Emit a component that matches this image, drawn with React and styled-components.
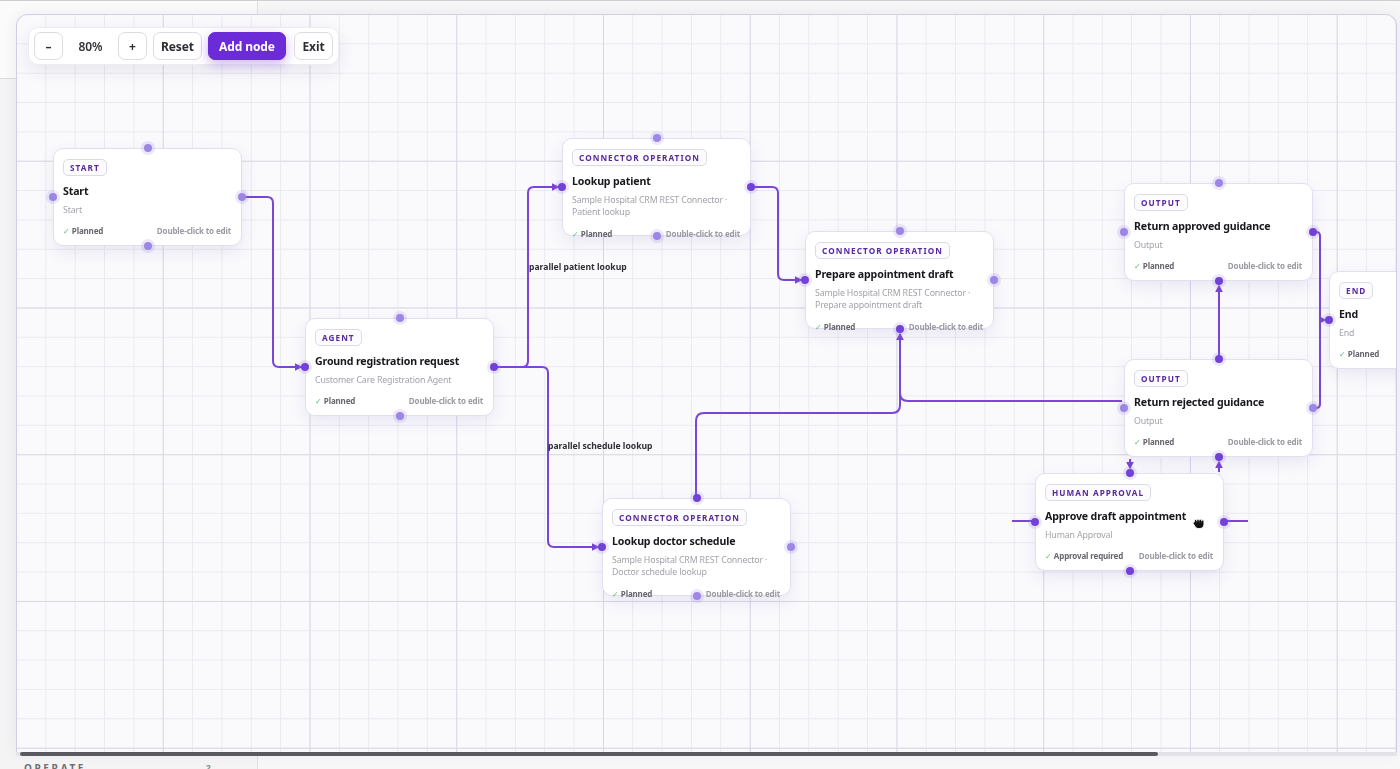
import React from 'react';
import styled, { createGlobalStyle } from 'styled-components';

// panel padding box starts here on the screen, all canvas data is in screen px
const OX = 17;
const OY = 15;
const EDGE = '#7a45d8';

const GlobalStyle = createGlobalStyle`
  html, body {
    margin: 0;
    height: 100%;
  }
  body {
    background: #f6f6f7;
    border-top: 1px solid #cfcfd3;
    box-sizing: border-box;
    overflow: hidden;
    font-family: "Noto Sans", "Open Sans", sans-serif;
  }
  #root {
    height: 100%;
  }
`;

const Shell = styled.div`
  display: grid;
  grid-template-columns: 258px 1fr;
  height: 100%;
`;

const Sidebar = styled.aside`
  display: flex;
  flex-direction: column;
  border-right: 1px solid #e1e1e4;
  background: #f4f4f5;
  overflow: hidden;
`;

const SidebarHeader = styled.div`
  height: 77px;
  flex-shrink: 0;
  background: #fbfbfb;
  border-bottom: 1px solid #dcdce0;
`;

const SidebarNav = styled.nav`
  flex: 1;
`;

const SectionHead = styled.div`
  display: flex;
  align-items: flex-start;
  justify-content: space-between;
  height: 20px;
  margin-bottom: -12px;
  padding: 0 46px 0 24px;
  font-size: 10px;
  font-weight: 700;
  letter-spacing: 2.6px;
  color: #6f6f76;
`;

const Count = styled.span`
  font-size: 9px;
  letter-spacing: 0;
  color: #8a8a90;
`;

const Main = styled.main`
  background: #f7f7f8;
`;

const Overlay = styled.div`
  position: fixed;
  left: 16px;
  top: 14px;
  right: 3px;
  bottom: 13px;
  display: flex;
  flex-direction: column;
`;

const Panel = styled.div`
  flex: 1;
  position: relative;
  overflow: hidden;
  border: 1px solid #d3cee6;
  border-bottom: none;
  border-radius: 12px 12px 0 0;
  background-color: #fafafd;
  background-image:
    linear-gradient(to right, #dad8e7 1px, transparent 1px),
    linear-gradient(to bottom, #dad8e7 1px, transparent 1px),
    linear-gradient(to right, #eaeaf1 1px, transparent 1px),
    linear-gradient(to bottom, #eaeaf1 1px, transparent 1px);
  background-size: 146.75px 146.75px, 146.75px 146.75px, 29.35px 29.35px, 29.35px 29.35px;
  background-position: -1px -1px;
  box-shadow: 0 0 14px rgba(60, 50, 100, 0.08);
`;

const ScrollTrack = styled.div`
  height: 4px;
  flex-shrink: 0;
  background: #e8e8ec;
`;

const ScrollThumb = styled.div`
  width: 1138px;
  height: 100%;
  margin-left: 4px;
  border-radius: 2px;
  background: #5c5c61;
`;

const Toolbar = styled.div`
  position: absolute;
  left: 11px;
  top: 12px;
  z-index: 5;
  display: flex;
  align-items: center;
  gap: 6px;
  padding: 4px 5px;
  background: #fff;
  border: 1px solid #ececf1;
  border-radius: 10px;
  box-shadow: 0 6px 18px rgba(40, 30, 80, 0.09);
`;

const Button = styled.button`
  height: 28px;
  width: ${p => p.$w}px;
  padding: 0;
  margin-left: ${p => p.$ml || 0}px;
  border: 1px solid ${p => (p.$primary ? '#6b2bd6' : '#dcdce2')};
  border-radius: 7px;
  background: ${p => (p.$primary ? '#6b2bd6' : '#fff')};
  color: ${p => (p.$primary ? '#fff' : '#2d2d33')};
  font-family: inherit;
  font-size: 12px;
  font-weight: 700;
  letter-spacing: -0.1px;
  cursor: pointer;
  box-shadow: ${p => (p.$primary ? '0 4px 12px rgba(107, 43, 214, 0.35)' : 'none')};
`;

const ZoomValue = styled.span`
  width: 43px;
  text-align: center;
  font-size: 12px;
  font-weight: 600;
  color: #333338;
`;

const EdgeLayer = styled.svg`
  position: absolute;
  left: 0;
  top: 0;
  width: 100%;
  height: 100%;
  overflow: visible;
  pointer-events: none;
`;

const EdgeLabel = styled.span.attrs(p => ({ style: { left: p.$x - OX, top: p.$y - OY } }))`
  position: absolute;
  transform: translateY(-50%);
  font-size: 8.6px;
  font-weight: 700;
  color: #2f2f36;
  white-space: nowrap;
`;

const Card = styled.div.attrs(p => ({ style: { left: p.$x - OX, top: p.$y - OY } }))`
  position: absolute;
  width: 189px;
  height: 98px;
  box-sizing: border-box;
  padding: 10px 10px 0 9px;
  background: #fff;
  border: 1px solid #e3dff0;
  border-radius: 10px;
  box-shadow: 0 6px 16px rgba(90, 70, 150, 0.1);
`;

const Badge = styled.div`
  display: flex;
  align-items: center;
  width: max-content;
  height: 17px;
  box-sizing: border-box;
  padding: 0 6px;
  border: 1px solid #dcdae6;
  border-radius: 5px;
  background: #fcfcff;
  font-size: 8.2px;
  font-weight: 700;
  letter-spacing: 1.05px;
  color: #58299c;
`;

const Title = styled.div`
  margin-top: 8px;
  font-size: 10.6px;
  font-weight: 700;
  letter-spacing: -0.15px;
  line-height: 15px;
  color: #17171c;
  white-space: nowrap;
`;

const Sub = styled.div`
  margin-top: 4.75px;
  font-size: 8.8px;
  letter-spacing: -0.15px;
  line-height: 12.5px;
  color: #a2a2aa;
  white-space: pre;
`;

const Footer = styled.div`
  display: flex;
  justify-content: space-between;
  margin-top: 8.75px;
  font-size: 8px;
  font-weight: 700;
  letter-spacing: -0.15px;
  line-height: 12px;
  color: #66666e;
  white-space: nowrap;
`;

const Check = styled.span`
  color: #5bbd74;
  margin-right: 2px;
  font-weight: 400;
`;

const Hint = styled.span`
  color: #9a9aa2;
`;

const Handle = styled.span`
  position: absolute;
  width: 8px;
  height: 8px;
  border-radius: 50%;
  background: ${p => (p.$strong ? '#7242d8' : '#9c86e6')};
  box-shadow: 0 0 0 3px rgba(150, 125, 230, 0.18);
  ${p => p.$side === 'top' && 'top: -5px; left: 50%; margin-left: -4px;'}
  ${p => p.$side === 'bottom' && 'bottom: -5px; left: 50%; margin-left: -4px;'}
  ${p => p.$side === 'left' && 'left: -5px; top: 50%; margin-top: -4px;'}
  ${p => p.$side === 'right' && 'right: -5px; top: 50%; margin-top: -4px;'}
`;

const Cursor = styled.svg.attrs(p => ({ style: { left: p.$x - OX, top: p.$y - OY } }))`
  position: absolute;
  width: 15px;
  height: 15px;
  overflow: visible;
`;

const nodes = [
  { id: 'start', x: 53, y: 148, kind: 'START', title: 'Start', sub: 'Start', status: 'Planned' },
  { id: 'agent', x: 305, y: 318, kind: 'AGENT', title: 'Ground registration request', sub: 'Customer Care Registration Agent', status: 'Planned', strong: ['left', 'right'] },
  { id: 'patient', x: 562, y: 138, kind: 'CONNECTOR OPERATION', title: 'Lookup patient', sub: 'Sample Hospital CRM REST Connector ·\nPatient lookup', status: 'Planned', strong: ['left', 'right'] },
  { id: 'prepare', x: 805, y: 231, kind: 'CONNECTOR OPERATION', title: 'Prepare appointment draft', sub: 'Sample Hospital CRM REST Connector ·\nPrepare appointment draft', status: 'Planned', strong: ['left', 'bottom'] },
  { id: 'doctor', x: 602, y: 498, kind: 'CONNECTOR OPERATION', title: 'Lookup doctor schedule', sub: 'Sample Hospital CRM REST Connector ·\nDoctor schedule lookup', status: 'Planned', strong: ['left', 'top'] },
  { id: 'approved', x: 1124, y: 183, kind: 'OUTPUT', title: 'Return approved guidance', sub: 'Output', status: 'Planned', strong: ['right', 'bottom'] },
  { id: 'rejected', x: 1124, y: 359, kind: 'OUTPUT', title: 'Return rejected guidance', sub: 'Output', status: 'Planned', strong: ['top', 'bottom'] },
  { id: 'approve', x: 1035, y: 473, kind: 'HUMAN APPROVAL', title: 'Approve draft appointment', sub: 'Human Approval', status: 'Approval required', strong: ['top', 'bottom', 'left', 'right'] },
  { id: 'end', x: 1329, y: 271, kind: 'END', title: 'End', sub: 'End', status: 'Planned', strong: ['left'] },
];

const edges = [
  { d: 'M242 197 H267 Q273 197 273 203 V361 Q273 367 279 367 H301', arrow: true },
  { d: 'M494 367 H522 Q528 367 528 361 V193 Q528 187 534 187 H558', arrow: true },
  { d: 'M494 367 H542 Q548 367 548 373 V541 Q548 547 554 547 H598', arrow: true },
  { d: 'M751 187 H772 Q778 187 778 193 V274 Q778 280 784 280 H801', arrow: true },
  { d: 'M696 497 V421 Q696 413 704 413 H892 Q900 413 900 405 V334', arrow: true },
  { d: 'M1122 401 H908 Q900 401 900 393' },
  { d: 'M1313 232 H1316 Q1320 232 1320 236 V316 Q1320 320 1324 320 H1325', arrow: true },
  { d: 'M1313 408 H1316 Q1320 408 1320 404 V322' },
  { d: 'M1219 359 V286', arrow: true },
  { d: 'M1130 459 V468', arrow: true },
  { d: 'M1219 472 V462', arrow: true },
  { d: 'M1012 521 H1035' },
  { d: 'M1224 521 H1248' },
];

const sides = ['top', 'left', 'right', 'bottom'];

const NodeCard = ({ node }) => (
  <Card $x={node.x} $y={node.y}>
    <Badge>{node.kind}</Badge>
    <Title>{node.title}</Title>
    <Sub>{node.sub}</Sub>
    <Footer>
      <span><Check>✓</Check>{node.status}</span>
      <Hint>Double-click to edit</Hint>
    </Footer>
    {sides.map(s => (
      <Handle key={s} $side={s} $strong={node.strong && node.strong.includes(s)} />
    ))}
  </Card>
);

const Edges = () => (
  <EdgeLayer>
    <defs>
      <marker id="arrow" viewBox="0 0 10 10" refX="8" refY="5" markerWidth="4" markerHeight="4" orient="auto">
        <path d="M0 0 L10 5 L0 10 z" fill={EDGE} />
      </marker>
    </defs>
    <g transform={`translate(${-OX} ${-OY})`}>
      {edges.map((e, i) => (
        <path
          key={i}
          d={e.d}
          fill="none"
          stroke={EDGE}
          strokeWidth="2"
          markerEnd={e.arrow ? 'url(#arrow)' : undefined}
        />
      ))}
    </g>
  </EdgeLayer>
);

const GrabCursor = () => (
  <Cursor $x={1191} $y={515} viewBox="0 0 20 20">
    <path
      d="M4.5 9 V7.6 a1.6 1.6 0 0 1 3.2 0 V7 a1.6 1.6 0 0 1 3.2 0 V7.2 a1.6 1.6 0 0 1 3.2 0 V8 a1.6 1.6 0 0 1 3.2 0 V12.5 c0 3.2 -2.3 5.5 -5.4 5.5 H10 c-2.2 0 -3.6 -1 -4.6 -2.6 L2.8 11.4 c-0.6 -1 0.4 -2.2 1.4 -1.7 Z"
      fill="#111"
      stroke="#fff"
      strokeWidth="1.3"
      strokeLinejoin="round"
    />
    <path d="M7.7 7.8 V10 M10.9 7.4 V10 M14.1 7.6 V10" stroke="#777" strokeWidth="0.8" />
  </Cursor>
);

const App = () => {
  return (
    <>
      <GlobalStyle />
      <Shell>
        <Sidebar>
          <SidebarHeader />
          <SidebarNav />
          <SectionHead>
            <span>OPERATE</span>
            <Count>2</Count>
          </SectionHead>
        </Sidebar>
        <Main />
      </Shell>
      <Overlay>
        <Panel>
          <Edges />
          <EdgeLabel $x={529} $y={267}>parallel patient lookup</EdgeLabel>
          <EdgeLabel $x={548} $y={446}>parallel schedule lookup</EdgeLabel>
          {nodes.map(n => (
            <NodeCard key={n.id} node={n} />
          ))}
          <GrabCursor />
          <Toolbar>
            <Button $w={29}>–</Button>
            <ZoomValue>80%</ZoomValue>
            <Button $w={29}>+</Button>
            <Button $w={49}>Reset</Button>
            <Button $w={78} $primary>Add node</Button>
            <Button $w={39} $ml={2}>Exit</Button>
          </Toolbar>
        </Panel>
        <ScrollTrack>
          <ScrollThumb />
        </ScrollTrack>
      </Overlay>
    </>
  );
};

export default App;
